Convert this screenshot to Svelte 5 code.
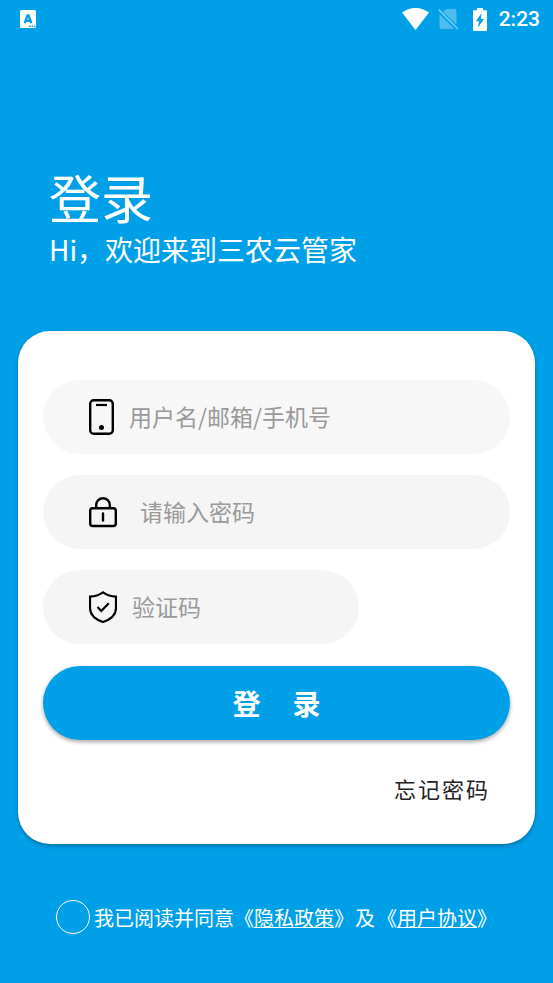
<script lang="ts">
    let account = "";
    let password = "";
    let code = "";
    let agreed = false;
</script>

<svelte:head>
    <title>登录</title>
</svelte:head>

<div class="page">
    <div class="status">
        <svg width="17" height="19" viewBox="0 0 17 19" aria-hidden="true">
            <rect width="16" height="18" rx="1.5" fill="#fff" />
            <path d="M4.800 13.200 7.600 5.400h1L11.400 13.200M6 10.800h4.500" fill="none" stroke="#0a9be6" stroke-width="2.400" />
            <path d="M9 16.200h1.600M11.600 16.200h1.600M14 16.200h1.400" stroke="#0a9be6" stroke-width="1.400" />
        </svg>
        <div class="system">
            <svg class="wifi" width="27" height="22" viewBox="0 0 27 22" aria-hidden="true">
                <path d="M13.5 22 0 4.6C3.6 1.8 8.4 0 13.5 0S23.4 1.8 27 4.6z" fill="#fff" />
            </svg>
            <svg class="sim" width="21" height="22" viewBox="0 0 21 22" aria-hidden="true">
                <path d="M8.2 1H16.500q2 0 2 2V16.600L5 3.800zM1.500 6.200 16.500 21H3.500q-2 0-2-2z" fill="#fff" opacity="0.3" />
                <path d="M0.700 1.700 20 21" stroke="#fff" stroke-width="1.700" opacity="0.45" />
            </svg>
            <svg class="battery" width="14" height="23" viewBox="0 0 14 23" aria-hidden="true">
                <path d="M4 0h6v2.300h3q1 0 1 1V22q0 1-1 1H1q-1 0-1-1V3.300q0-1 1-1h3z" fill="#fff" />
                <path d="M8.500 5 3 13.200h3L5 19.500 11 11H7.800z" fill="#00a0e9" />
            </svg>
            <span class="time">2:23</span>
        </div>
    </div>

    <header>
        <h1>登录</h1>
        <p>Hi，欢迎来到三农云管家</p>
    </header>

    <form class="card" on:submit|preventDefault>
        <label class="field phone">
            <svg width="26" height="36" viewBox="0 0 26 36" aria-hidden="true">
                <rect x="1.200" y="1.200" width="22.600" height="33.600" rx="3.500" fill="none" stroke="#000" stroke-width="2.400" />
                <path d="M7 6h11" stroke="#000" stroke-width="2.200" />
                <circle cx="12.500" cy="28.500" r="2.500" />
            </svg>
            <input type="text" aria-label="用户名/邮箱/手机号" placeholder="用户名/邮箱/手机号" bind:value={account} />
        </label>
        <label class="field password">
            <svg width="28" height="32" viewBox="0 0 28 32" aria-hidden="true">
                <g fill="none" stroke="#000" stroke-width="2.400">
                    <rect x="1.200" y="12.200" width="25.600" height="17.800" rx="2.500" />
                    <path d="M7.200 12.200V9a6.800 6.800 0 0 1 13.600 0v3.200" />
                    <path d="M14 17.500v7" stroke-linecap="round" />
                </g>
            </svg>
            <input type="password" aria-label="请输入密码" placeholder="请输入密码" bind:value={password} />
        </label>
        <label class="field code">
            <svg width="28" height="32" viewBox="0 0 28 32" aria-hidden="true">
                <g fill="none" stroke="#000" stroke-width="2.200">
                    <path d="M14 1.300C10.500 3.700 6.500 5.300 1 5.600V17c0 6.500 5.500 11.500 13 14 7.500-2.500 13-7.500 13-14V5.600C21.500 5.300 17.500 3.700 14 1.300z" />
                    <path d="M8.500 16l3.800 4 7.500-7.800" />
                </g>
            </svg>
            <input type="text" aria-label="验证码" placeholder="验证码" bind:value={code} />
        </label>
        <button type="submit">登&nbsp;&nbsp;&nbsp;&nbsp;&nbsp;录</button>
        <a class="forgot" href="#forgot">忘记密码</a>
    </form>

    <footer>
        <input id="agree" type="checkbox" bind:checked={agreed} />
        <div class="terms">
            <label for="agree">我已阅读并同意</label><span>《<a href="#privacy">隐私政策</a>》</span><span class="and">及</span><span>《<a href="#terms">用户协议</a>》</span>
        </div>
    </footer>
</div>

<style>
    :global(body) {
        background: #00a0e9;
    }

    .page {
        min-height: 100vh;
        box-sizing: border-box;

        color: #fff;
        background: #00a0e9;
        font-family: "Noto Sans CJK SC", sans-serif;
    }

    .status {
        height: 38px;
        padding: 0 13px 0 20px;

        display: flex;
        align-items: center;
        justify-content: space-between;
    }

    .system {
        display: flex;
        align-items: center;
    }

    .sim {
        margin-left: 9px;
    }

    .battery {
        margin-left: 14px;
    }

    .time {
        margin-left: 12px;
        font-family: Roboto, sans-serif;
        font-weight: 500;
        font-size: 21px;
        line-height: 38px;
    }

    header {
        padding: 128px 49px 0;
    }

    h1 {
        margin: 0;
        font-weight: 400;
        font-size: 52px;
        line-height: 62px;
    }

    p {
        margin: 0;
        font-size: 28px;
        line-height: 42px;
    }

    .card {
        margin: 61px 18px 0;
        padding: 49px 25px 41px;

        display: flex;
        flex-direction: column;
        gap: 21px;

        background: #fff;
        border-radius: 32px;
        box-shadow: 0 2px 4px rgba(0, 0, 0, 0.3);
    }

    .field {
        height: 74px;
        padding: 0 46px;
        box-sizing: border-box;

        display: flex;
        align-items: center;

        background: #f5f5f5;
        border-radius: 37px;
    }

    .field svg {
        flex: none;
    }

    .field input {
        flex: 1;
        min-width: 0;
        padding: 0 0 2px;

        color: #222;
        font-family: inherit;
        font-size: 23px;
        line-height: 34px;

        background: transparent;
        border: none;
        outline: none;
    }

    .field input::placeholder {
        color: #999;
        opacity: 1;
    }

    .phone {
        gap: 14px;
        background: #f7f7f7;
    }

    .password {
        gap: 23px;
    }

    .code {
        margin-right: 151px;
        gap: 15px;
    }

    button {
        height: 74px;
        margin-top: 1px;
        padding: 0;

        color: #fff;
        font-family: inherit;
        font-weight: 700;
        font-size: 28px;

        background: #00a0e9;
        border: none;
        border-radius: 37px;
        box-shadow: 0 2px 4px rgba(0, 0, 0, 0.35);
        cursor: pointer;
    }

    .forgot {
        align-self: flex-end;
        margin: 12px 20px 0 0;

        color: #222;
        font-size: 22px;
        line-height: 30px;
        letter-spacing: 2px;
        text-decoration: none;
    }

    footer {
        padding: 56px 56px 20px;

        display: flex;
        align-items: center;
        gap: 4px;
    }

    footer input {
        width: 34px;
        height: 34px;
        margin: 0;
        flex: none;

        appearance: none;
        border: 1px solid #fff;
        border-radius: 50%;
        cursor: pointer;
    }

    footer input:checked {
        background: #fff;
        box-shadow: inset 0 0 0 6px #00a0e9;
    }

    .terms {
        padding-top: 2px;
        font-size: 20px;
        line-height: 30px;
        white-space: nowrap;
    }

    .terms a {
        color: inherit;
        text-decoration: underline;
        text-decoration-thickness: 1px;
    }

    .and {
        margin: 0 2px 0 1px;
    }
</style>
